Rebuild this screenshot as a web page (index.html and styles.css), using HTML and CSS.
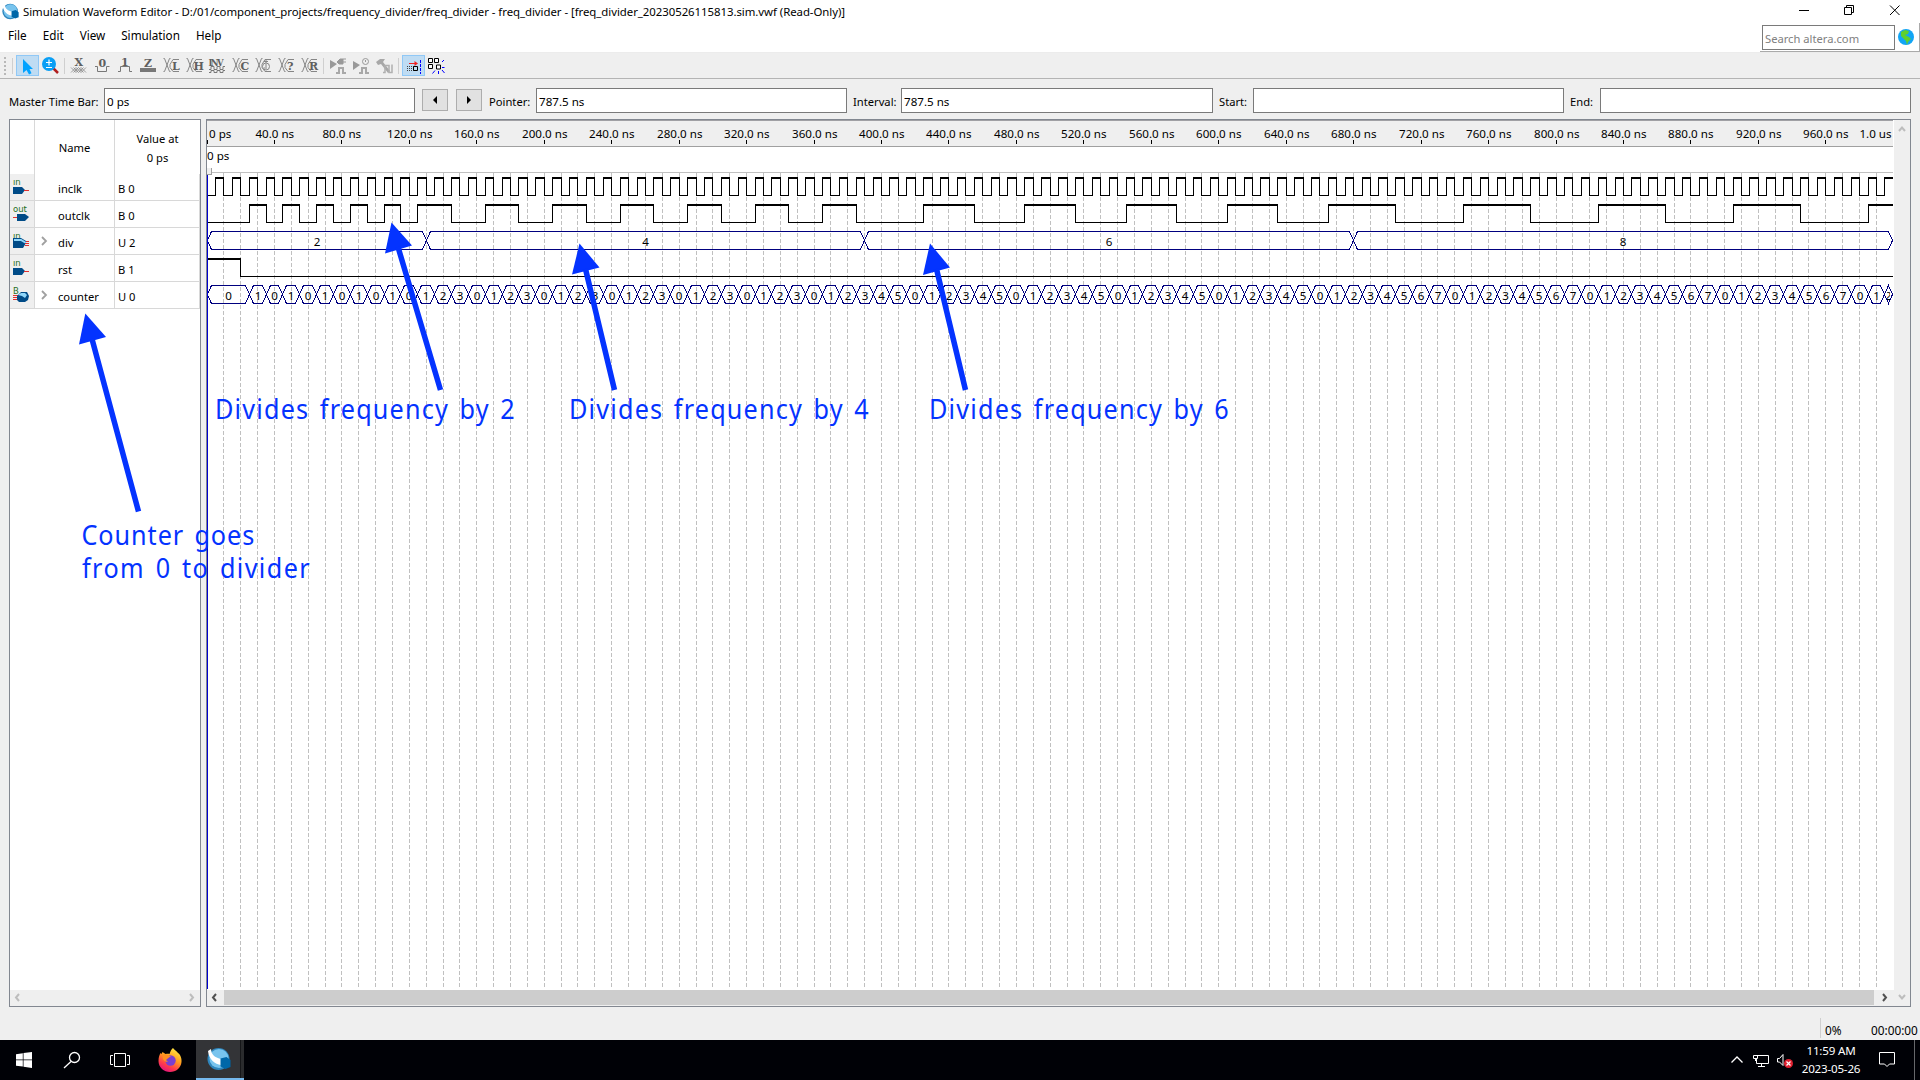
FILE: index.html
```html
<!DOCTYPE html>
<html lang="en">
<head>
<meta charset="utf-8">
<title>Simulation Waveform Editor</title>
<link rel="stylesheet" href="styles.css">
</head>
<body>
<svg class="defs" width="0" height="0">
  <defs>
    <symbol id="logo" viewBox="0 0 24 24">
      <circle cx="11.5" cy="12" r="11" fill="#2f86bd"/>
      <circle cx="12" cy="11.5" r="9.6" fill="#78c4ee"/>
      <path d="M1 4C2 13 8 17 14 18l0-6C9 11 4 8 4 2z" fill="#fff"/>
      <path d="M13.5 11.5l6-1.5 4 3v7l-5 2-5-2.500z" fill="#0067a8"/>
    </symbol>
    <symbol id="pin-in" viewBox="0 0 17 17">
      <path d="M0 8h9l3 3-3 4H0z" fill="#004b87"/><path d="M11 11.500h5" stroke="#e03030"/>
      <text x="0" y="6" class="pin">in</text>
    </symbol>
    <symbol id="pin-out" viewBox="0 0 17 17">
      <path d="M4 8h8l4 3-4 4H4z" fill="#004b87"/><path d="M0 11.500h4" stroke="#e03030"/>
      <text x="0" y="6" class="pin">out</text>
    </symbol>
    <symbol id="pin-bus" viewBox="0 0 17 17">
      <text x="0" y="6" class="pin">in</text>
      <path d="M0 5h8l5 3v2l-3 5H0z" fill="#004b87"/><path d="M1 7h7l5 3" stroke="#8fd6fa" stroke-width="2" fill="none"/>
      <path d="M13 8.500h3M12 10.500h4M12 12.500h4" stroke="#e03030"/>
    </symbol>
    <symbol id="pin-reg" viewBox="0 0 17 17">
      <path d="M0 8.500h5M0 10.500h4M0 12.500h5" stroke="#e03030"/>
      <path d="M4 9l4-4h6l2 4-1 4-3 2H6l-2-2z" fill="#004b87"/><path d="M5 8l3-2h4l2 2-2 3-3-2z" fill="#8fd6fa"/>
      <text x="0" y="7" class="pin">B</text>
    </symbol>
    <symbol id="xin" viewBox="0 0 23 21">
      <path d="M3.500 3.500h1l5 13h1M10.500 3.500h-1l-5 13h-1M19 4.500h-6l-3 5v3l3 4h6" fill="none" stroke="#868686"/>
    </symbol>
  </defs>
</svg>
<div class="window">
  <header class="titlebar">
    <svg class="app" width="17" height="17"><use href="#logo"/></svg>
    <span class="caption">Simulation Waveform Editor - D:/01/component_projects/frequency_divider/freq_divider - freq_divider - [freq_divider_20230526115813.sim.vwf (Read-Only)]</span>
    <svg class="winbtns" width="120" height="22" fill="none" stroke="#000">
      <path d="M9 10.500h10" /><path d="M54.500 7.500h7v7h-7zM56.500 7v-1.500h7v7H62"/><path d="M100 5.500l9.500 9.500M109.500 5.500L100 15"/>
    </svg>
  </header>
  <nav class="menubar">
    <span>File</span><span>Edit</span><span>View</span><span>Simulation</span><span>Help</span>
    <div class="search"><span class="searchbox">Search altera.com</span>
      <svg width="16" height="16"><circle cx="8" cy="8" r="8" fill="#12a5f4"/><path d="M3 3l4-2 4 1-1 3-3 1 4 2 2 2-3 3-1 3-1-4-3-3-2-2z" fill="#5fd02c"/></svg>
    </div>
  </nav>
  <div class="toolbar">
    <i class="grip"></i><i class="sep first"></i>
    <svg class="tool on"><path d="M7 4v14l3.500-3 2.500 4.500 2.500-1.200L13.500 14h3.500z" fill="#00a2ff"/></svg>
    <svg class="tool"><path d="M14 13l5 5" stroke="#b02020" stroke-width="2.500"/><circle cx="10" cy="9" r="7" fill="#0a9ff5"/><path d="M7 7.500h6M10 4.500v6M7 12.500h6" stroke="#fff" stroke-width="1.200"/></svg>
    <i class="sep"></i>
    <svg class="tool"><text x="6.500" y="11">X</text><path d="M3 12.500l5 5 5-5 5 5M3 17.500l5-5 5 5 5-5M5.500 12.500l5 5 5-5M5.500 17.500l5-5 5 5" fill="none" stroke="#868686" stroke-width=".8"/></svg>
    <svg class="tool"><text x="7.500" y="12">0</text><path d="M4 11.500h2.500v5h9v-5h3" fill="none" stroke="#787878"/></svg>
    <svg class="tool"><text x="7" y="10.500">1</text><path d="M4 16.500h2.500v-5h9v5h2.500" fill="none" stroke="#787878"/></svg>
    <svg class="tool"><text x="7" y="11.500">Z</text><path d="M3 13h16v4H3z" fill="#787878"/></svg>
    <svg class="tool"><use href="#xin"/><text x="12" y="14.500">L</text></svg>
    <svg class="tool"><use href="#xin"/><text x="10.500" y="14.500">H</text></svg>
    <svg class="tool"><text class="inv" x="2.500" y="10.500" textLength="15">INV</text><path d="M3 14.500h2v-3h3v3h3v-3h3v3h3v-3h2M3 17.500h2v-2h3v2h3v-2h3v2h3v-2h2" fill="none" stroke="#787878"/></svg>
    <svg class="tool"><use href="#xin"/><text x="11.500" y="14.500">C</text></svg>
    <svg class="tool"><use href="#xin"/><circle cx="14" cy="11.500" r="3.500" fill="#efefef" stroke="#868686"/><path d="M14 5v3M12 6.500h4M14 9v3M12 13h3" stroke="#868686"/></svg>
    <svg class="tool"><use href="#xin"/><text x="12" y="14.500">?</text></svg>
    <svg class="tool"><use href="#xin"/><text x="11" y="14.500">R</text></svg>
    <i class="sep"></i>
    <svg class="tool"><path d="M3 5l7 4-7 5z" fill="#999"/><path d="M9 18h3v-5h4v5h3" fill="none" stroke="#a8a8a8" stroke-width="2"/><path d="M10 7l3-3h3v5h-4zM16 4h3M16 7h3" fill="#999" stroke="#999"/></svg>
    <svg class="tool"><path d="M3 6l7 4-7 5z" fill="#999"/><path d="M9 18h3v-5h4v5h3" fill="none" stroke="#a8a8a8" stroke-width="2"/><circle cx="15.500" cy="6.500" r="3" fill="#eee" stroke="#999"/><path d="M15.500 5v2" stroke="#999"/></svg>
    <svg class="tool"><path d="M3 7l4-3h5l-2 3 7 9-2 2-7-9-3 1z" fill="#a8a8a8"/><path d="M10 17.500h2v-7h4v7h3v-8" fill="none" stroke="#b0b0b0" stroke-width="1.500"/></svg>
    <i class="sep"></i>
    <svg class="tool on"><path d="M7 8.500h8" stroke="#f02020" /><path d="M12.500 6l3.500 2.500-3.500 2.500z" fill="#f02020"/><path d="M5 11.500h7M5 15.500h7M5 13.500h7" stroke="#444" stroke-dasharray="1 1"/><path d="M11.500 11.500h4v4h-4z" fill="#bfdcf3" stroke="#000"/><path d="M18.500 5v14" stroke="#00f" stroke-dasharray="3 1"/></svg>
    <svg class="tool"><path d="M3.500 3.500h4v4h-4zM9.500 3.500h4v4h-4zM3.500 9.500h4v4h-4zM11.500 10h4v4h-4z" fill="#fff" stroke="#000"/><path d="M17 7l2-2M17 12.500h2.500M17 15l2.500 3M13.500 16v3M10 15.500l-2.500 3" stroke="#00f" fill="none"/></svg>
  </div>
  <div class="timebar">
    <label>Master Time Bar:</label><span class="field num">0 ps</span>
    <button class="prev"><svg width="4" height="8"><path d="M4 0v8L0 4z"/></svg></button>
    <button class="next"><svg width="4" height="8"><path d="M0 0v8l4-4z"/></svg></button>
    <label class="l2">Pointer:</label><span class="field num">787.5 ns</span>
    <label class="l3">Interval:</label><span class="field num wide">787.5 ns</span>
    <label class="l4">Start:</label><span class="field"></span>
    <label class="l5">End:</label><span class="field"></span>
  </div>
  <main class="panes">
    <section class="signals">
      <div class="row head"><span></span><span>Name</span><span>Value at<br>0 ps</span></div>
      <div class="row"><span class="ic"><svg><use href="#pin-in"/></svg></span><span class="nm">inclk</span><span class="val">B 0</span></div>
      <div class="row"><span class="ic"><svg><use href="#pin-out"/></svg></span><span class="nm">outclk</span><span class="val">B 0</span></div>
      <div class="row"><span class="ic"><svg><use href="#pin-bus"/></svg></span><span class="nm"><svg class="exp"><path d="M1 1l4 4-4 4"/></svg>div</span><span class="val">U 2</span></div>
      <div class="row"><span class="ic"><svg><use href="#pin-in"/></svg></span><span class="nm">rst</span><span class="val">B 1</span></div>
      <div class="row"><span class="ic"><svg><use href="#pin-reg"/></svg></span><span class="nm"><svg class="exp"><path d="M1 1l4 4-4 4"/></svg>counter</span><span class="val">U 0</span></div>
      <div class="hscroll dim"><svg class="arr"><path d="M5 1L2 4.500 5 8"/></svg><svg class="arr"><path d="M2 1l3 3.500L2 8"/></svg></div>
    </section>
    <section class="waves">
      <svg id="canvas" width="1686" height="870"></svg>
      <div class="vscroll"><svg class="arr"><path d="M1 6l3-3.500L7 6"/></svg><svg class="arr"><path d="M1 2l3 3.500L7 2"/></svg></div>
      <div class="hscroll"><svg class="arr"><path d="M5 1L2 4.500 5 8"/></svg><i class="thumb"></i><svg class="arr"><path d="M2 1l3 3.500L2 8"/></svg></div>
    </section>
  </main>
  <div class="status"><span class="pct">0%</span><span>00:00:00</span></div>
  <footer class="taskbar">
    <span class="task"><svg width="16" height="16"><path d="M0 2.200L6.800 1.200V7.500H0zM7.500 1.100L16 0v7.500H7.500zM0 8.300h6.800v6.300L0 13.700zM7.500 8.300H16V16l-8.500-1.200z" fill="#fff"/></svg></span>
    <span class="task"><svg width="18" height="18" fill="none" stroke="#fff" stroke-width="1.300"><circle cx="11.500" cy="6.500" r="5"/><path d="M8 10.500L1 17"/></svg></span>
    <span class="task"><svg width="20" height="16" fill="none" stroke="#fff"><path d="M4.500 1.500h11v13h-11zM3 3.500H.5v9H3M17 3.500h2.500v9H17"/></svg></span>
    <span class="task ff"><svg width="24" height="24" viewBox="0 0 24 24">
      <defs><linearGradient id="fx" x1=".8" y1="0" x2=".3" y2="1"><stop offset="0" stop-color="#fff044"/><stop offset=".45" stop-color="#ff9a1f"/><stop offset=".75" stop-color="#ff3b4b"/><stop offset="1" stop-color="#e3127f"/></linearGradient></defs>
      <path d="M15 0c1 2 4 3 5 5 2 1 4 5 3.500 9-.5 6-5.500 10-11.500 10S.5 19.500.5 13c0-4 1-6 2-8l1 1 1-2 3 2c2-.5 3-.5 4 0 1-3 2-5 3.500-6z" fill="url(#fx)"/>
      <circle cx="12.500" cy="12.500" r="5.200" fill="#7a3fd0"/><path d="M5 7c3-1 6 0 8 2-3 0-3 2-5 3l2 2c-4 0-6-3-5-7z" fill="#ff9020"/></svg></span>
    <span class="task active"><svg width="24" height="24"><use href="#logo"/></svg></span>
    <div class="tray">
      <svg width="12" height="7" fill="none" stroke="#fff" stroke-width="1.300"><path d="M.5 6.500L6 1l5.500 5.500"/></svg>
      <svg class="net" width="17" height="14" fill="none" stroke="#fff"><path d="M4 1.500h11.500v8H3.500V5M5 12.500h7M8.500 10v2M.5 1.500h4v3h-4zM2.500 4v3"/></svg>
      <svg class="vol" width="17" height="16"><path d="M.5 5.500h2l3.500-4v11l-3.500-3.500h-2z" fill="none" stroke="#fff"/><circle cx="11.500" cy="10.500" r="4.500" fill="#e02030"/><path d="M9.500 8.500l4 4M13.500 8.500l-4 4" stroke="#fff" stroke-width="1.200"/></svg>
      <div class="clock">11:59 AM<br>2023-05-26</div>
      <svg class="note" width="17" height="17" fill="none" stroke="#fff"><path d="M.5 1.500h15v11.500h-5l-2.500 2.500-2.500-2.500h-5z"/></svg>
      <i class="peek"></i>
    </div>
  </footer>
</div>
<svg class="notes" width="1920" height="1080">
  <g fill="#0433ff">
    <path d="M391.500 222.500L385 253.500 412 245.500z"/><path d="M579.500 243.500L572 274.500 599.500 267.500z"/><path d="M930 243.500L923 275 950 267.500z"/><path d="M85.300 313.500L79 344.500 106 337z"/>
  </g>
  <path d="M398 247L440.500 390M585.500 269L614.500 390M936.500 269L965.500 390M92 339L138.500 511.500" stroke="#0433ff" stroke-width="5.500"/>
  <g class="big">
    <text transform="translate(215 418.500) scale(.9 1)" textLength="333">Divides frequency by 2</text>
    <text transform="translate(569 418.500) scale(.9 1)" textLength="333">Divides frequency by 4</text>
    <text transform="translate(929 418.500) scale(.9 1)" textLength="333">Divides frequency by 6</text>
    <text transform="translate(81.500 545) scale(.9 1)" textLength="192">Counter goes</text>
    <text transform="translate(82 577.500) scale(.9 1)" textLength="253">from 0 to divider</text>
  </g>
</svg>
<script src="waves.js"></script>
</body>
</html>
```
FILE: styles.css
```css
* { box-sizing: border-box; }
body { margin: 0; width: 1920px; height: 1080px; overflow: hidden; background: #efefef; color: #000; font: 11.2px/14px "Noto Sans", "Open Sans", sans-serif; }
.defs { position: absolute; }
.window { display: flex; flex-direction: column; height: 1080px; }
.titlebar { display: flex; height: 24px; padding: 3px 0 0 2px; background: #fff; }
.caption { margin-left: 4px; font-size: 11.4px; line-height: 18px; letter-spacing: -.045px; white-space: nowrap; }
.winbtns { margin-left: auto; margin-top: -3px; margin-right: 10px; }
.menubar { display: flex; gap: 16px; height: 29px; padding: 4px 0 0 8px; background: #fff; border-bottom: 1px solid #ececec; font-size: 11.7px; line-height: 15px; }
.search { display: flex; gap: 3px; margin: -5px 0 0 auto; padding: 2px 5px 1px 2px; width: 160px; height: 29px; border-right: 1px solid #aaa; border-bottom: 1px solid #aaa; font-size: 11.2px; }
.searchbox { width: 133px; height: 25px; border: 1px solid #7a7a7a; padding: 5px 2px; color: #808080; }
.search svg { margin-top: 4px; flex: none; }
.toolbar { display: flex; height: 26px; padding: 2px 0 2px 4px; border-bottom: 1px solid #b4b4b4; }
.grip { width: 2px; height: 18px; margin-top: 2px; background: repeating-linear-gradient(#b8b8b8 0 2px, transparent 2px 4px); }
.sep { width: 6px; border-left: 1px solid #cfcfcf; height: 16px; margin: 3px -2px 0 2px; }
.sep.first { width: 4px; margin: 3px 0 0 6px; }
.tool { width: 23px; height: 21px; flex: none; }
.tool.on { background: #bfdcf3; outline: 1px solid #90c8f6; outline-offset: -1px; }
.tool text { font: bold 11px "DejaVu Serif", serif; fill: #5f5f5f; }
.tool text.inv { font-size: 8.5px; }
.timebar { display: flex; height: 40px; padding: 9px 0 0 9px; }
.timebar label { width: 95px; padding-top: 7px; white-space: nowrap; }
.field { width: 311px; height: 25px; border: 1px solid #7a7a7a; background: #fff; padding: 6px 2px; }
.field.wide { width: 312px; }
.num { font-size: 11.6px; }
.timebar button { width: 26px; height: 22px; margin: 1px 0 0 7px; padding: 0; border: 1px solid #adadad; background: #e1e1e1; display: flex; align-items: center; justify-content: center; }
.timebar .next { margin-left: 8px; }
.timebar .l2 { width: 47px; margin-left: 7px; }
.timebar .l3 { width: 48px; margin-left: 6px; }
.timebar .l4 { width: 34px; margin-left: 6px; }
.timebar .l5 { width: 30px; margin-left: 6px; }
.panes { display: flex; gap: 5px; height: 888px; padding: 0 8px 0 9px; }
.signals { width: 192px; display: flex; flex-direction: column; background: #fff; border: 1px solid #828790; }
.row { display: grid; grid-template-columns: 25px 80px 85px; height: 27px; border-bottom: 1px solid #d8d8d8; }
.row > span { border-right: 1px solid #d8d8d8; display: flex; align-items: center; padding-top: 3px; }
.row.head { height: 54px; border: 0; }
.row.head > span { justify-content: center; text-align: center; line-height: 19px; padding-top: 1px; }
.row.head > span:last-child { border: 0; }
.row .ic { background: #efefef; padding: 1px 0 0 3px; }
.ic svg { width: 17px; height: 17px; }
.pin { font: 8.5px "DejaVu Sans", sans-serif; fill: #1f701f; }
.nm { padding-left: 23px; }
.exp { width: 7px; height: 10px; margin: -3px 10px 0 -17px; fill: none; stroke: #a0a0a0; stroke-width: 1.8; }
.row .val { padding-left: 3px; }
.hscroll { display: flex; justify-content: space-between; align-items: center; height: 16px; padding: 0 4px 1px; background: #efefef; }
.signals .hscroll { margin-top: auto; }
.arr { width: 8px; height: 9px; fill: none; stroke: #505050; stroke-width: 2; flex: none; }
.dim .arr, .vscroll .arr { stroke: #bdbdbd; }
.waves { width: 1705px; display: grid; grid-template: 870px 16px / 1687px 16px; background: #fff; border: 1px solid #828790; }
#canvas { display: block; grid-row: 1; grid-column: 1; shape-rendering: crispEdges; }
.vscroll { grid-row: 1 / 3; grid-column: 2; display: flex; flex-direction: column; align-items: center; justify-content: space-between; padding: 5px 0 4px; background: #efefef; }
.waves .hscroll { grid-row: 2; grid-column: 1; justify-content: flex-start; gap: 5px; }
.thumb { width: 1650px; height: 15px; background: #cdcdcd; margin-right: 2px; }
.status { display: flex; height: 33px; padding: 11px 0 0 1820px; line-height: 24px; font-size: 11.8px; }
.pct { width: 51px; height: 20px; padding: 0 0 0 4px; border-left: 1px solid #cfcfcf; }
.taskbar { display: flex; height: 40px; background: #000106; color: #fff; }
.task { width: 48px; display: flex; align-items: center; justify-content: center; flex: none; }
.task.ff { width: 52px; }
.task.active { width: 48px; padding-right: 2px; background: linear-gradient(90deg, #333437 44px, #151618 44px 45px, #2a2b2d 45px); border-bottom: 2px solid #76b9ed; }
.tray { display: flex; margin-left: auto; align-items: flex-start; }
.tray svg { margin-top: 16px; }
.tray .net { margin: 14px 0 0 10px; }
.tray .vol { margin: 13px 0 0 7px; }
.clock { width: 62px; margin: 2px 0 0 6px; text-align: center; font-size: 11.6px; line-height: 18px; letter-spacing: -.2px; white-space: nowrap; }
.tray .note { margin: 11px 0 0 17px; }
.peek { width: 6px; height: 40px; margin-left: 18px; border-left: 1px solid #66676a; }
.notes { position: absolute; left: 0; top: 0; }
.big { font: 28px "Noto Sans", sans-serif; word-spacing: 3px; fill: #0433ff; }
.rl { font-size: 11.6px; }
```
FILE: waves.js
```js
const NS = 1.6863;
const px = t => Math.floor(t * NS);
let out = '';
const add = s => { out += s; };

// Ruler and time bar strip
add('<rect x="0" y="0" width="1686" height="26" fill="#efefef"/><path d="M0 .5H1686" stroke="#a0a0a4"/><path d="M0 26.5H1686" stroke="#a0a0a0"/><path d="M5 52.5H1686" stroke="#c0c0c0"/>');
add('<path d="M0 48h4v6H0z" fill="#efefef"/><path d="M4.5 48v6M0 54.5h5" stroke="#a0a0a0"/>');

// Grid
for (let t = 10; t < 1000; t += 10)
  add(`<path d="M${px(t) + .5} 53V869" stroke="#c0c0c0" stroke-dasharray="4 2"/>`);

for (let t = 0; t < 1000; t += 40) {
  add(`<path d="M${px(t) + .5} 20v4" stroke="#000"/>`);
  add(t ? `<text class="rl" x="${px(t) + .8}" y="18" text-anchor="middle">${t}.0 ns</text>` : '<text class="rl" x="2" y="18">0 ps</text>');
}
add('<text class="rl" x="1684.5" y="18" text-anchor="end">1.0 us</text><text class="rl" x="0" y="40">0 ps</text>');

// Single-bit signals: toggle times and starting level
function bit(toggles, level, row) {
  const hi = 58 + 27 * row, lo = hi + 17.5;
  let x = 0;
  [...toggles, 1000].forEach((t, i, a) => {
    const e = px(t);
    add(level ? `<path d="M${x} ${hi}H${e + 1}" stroke="#000" stroke-width="2"/>` : `<path d="M${x} ${lo}H${e + 1}" stroke="#000"/>`);
    if (i < a.length - 1) add(`<path d="M${e + .5} ${hi - 1}V${lo + .5}" stroke="#000"/>`);
    x = e; level = !level;
  });
}
const clk = [];
for (let t = 5; t < 1000; t += 5) clk.push(t);
bit(clk, false, 0);
bit([25,35,45,55,65,75,85,95,105,115,125,145,165,185,205,225,245,265,285,305,325,345,365,385,425,455,485,515,545,575,605,635,665,705,745,785,825,865,905,945,985], false, 1);
bit([20], true, 3);

// Bus values: list of [start, end, value]; a value too wide for its cell is clipped
function bus(list, row) {
  const a = 57.5 + 27 * row, b = a + 18, m = a + 9;
  for (const [s, e, v] of list) {
    const l = px(s) + .5, r = Math.min(px(e) + .5, 1685.5), w = Math.min(4, (r - l) / 2);
    add(`<path d="M${l} ${m}L${l + w} ${a}H${r - w}L${r} ${m}L${r - w} ${b}H${l + w}Z" fill="none" stroke="#00007f"/>`);
    if (r - l < 12) add(`<svg x="${l + 2.5}" y="${a}" width="3" height="18"><text class="rl" x="-2" y="14.5">${v}</text></svg>`);
    else add(`<text class="rl" x="${(l + r) / 2}" y="${m + 5.5}" text-anchor="middle">${v}</text>`);
  }
}
bus([[0,130,2],[130,390,4],[390,680,6],[680,1000,8]], 2);
const count = [[0, 25, 0]];
for (let t = 25; t < 1000; t += 10) {
  let v;
  if (t < 125) v = ((t - 15) / 10) % 2;
  else if (t < 395) v = ((t - 115) / 10) % 4;
  else if (t < 415) v = (t - 355) / 10;
  else if (t < 685) v = ((t - 415) / 10) % 6;
  else v = ((t - 655) / 10) % 8;
  count.push([t, Math.min(1000, t + 10), v]);
}
bus(count, 4);

// Master time bar
add('<path d="M.5 55V869" stroke="#0000d0"/>');
document.getElementById('canvas').innerHTML = out;
```
